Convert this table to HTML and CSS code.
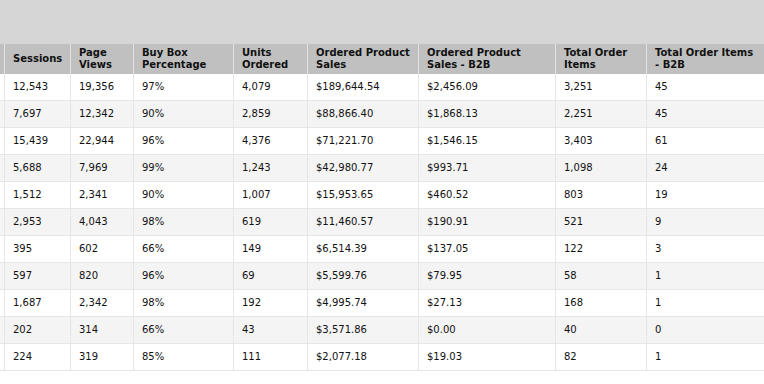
FILE: index.html
```html
<!DOCTYPE html>
<html>
<head>
<meta charset="utf-8">
<link rel="stylesheet" href="styles.css">
</head>
<body>
<div class="topbar"></div>
<div class="wrap">
<table class="grid">
<colgroup>
<col class="c0"><col class="c1"><col class="c2"><col class="c3"><col class="c4"><col class="c5"><col class="c6"><col class="c7"><col class="c8">
</colgroup>
<thead>
<tr><th></th><th>Sessions</th><th>Page<br>Views</th><th>Buy Box<br>Percentage</th><th>Units<br>Ordered</th><th>Ordered Product<br>Sales</th><th>Ordered Product<br>Sales - B2B</th><th>Total Order<br>Items</th><th>Total Order Items<br>- B2B</th></tr>
</thead>
<tbody>
<tr><td></td><td>12,543</td><td>19,356</td><td>97%</td><td>4,079</td><td>$189,644.54</td><td>$2,456.09</td><td>3,251</td><td>45</td></tr>
<tr><td></td><td>7,697</td><td>12,342</td><td>90%</td><td>2,859</td><td>$88,866.40</td><td>$1,868.13</td><td>2,251</td><td>45</td></tr>
<tr><td></td><td>15,439</td><td>22,944</td><td>96%</td><td>4,376</td><td>$71,221.70</td><td>$1,546.15</td><td>3,403</td><td>61</td></tr>
<tr><td></td><td>5,688</td><td>7,969</td><td>99%</td><td>1,243</td><td>$42,980.77</td><td>$993.71</td><td>1,098</td><td>24</td></tr>
<tr><td></td><td>1,512</td><td>2,341</td><td>90%</td><td>1,007</td><td>$15,953.65</td><td>$460.52</td><td>803</td><td>19</td></tr>
<tr><td></td><td>2,953</td><td>4,043</td><td>98%</td><td>619</td><td>$11,460.57</td><td>$190.91</td><td>521</td><td>9</td></tr>
<tr><td></td><td>395</td><td>602</td><td>66%</td><td>149</td><td>$6,514.39</td><td>$137.05</td><td>122</td><td>3</td></tr>
<tr><td></td><td>597</td><td>820</td><td>96%</td><td>69</td><td>$5,599.76</td><td>$79.95</td><td>58</td><td>1</td></tr>
<tr><td></td><td>1,687</td><td>2,342</td><td>98%</td><td>192</td><td>$4,995.74</td><td>$27.13</td><td>168</td><td>1</td></tr>
<tr><td></td><td>202</td><td>314</td><td>66%</td><td>43</td><td>$3,571.86</td><td>$0.00</td><td>40</td><td>0</td></tr>
<tr><td></td><td>224</td><td>319</td><td>85%</td><td>111</td><td>$2,077.18</td><td>$19.03</td><td>82</td><td>1</td></tr>
</tbody>
</table>
</div>
</body>
</html>
```
FILE: styles.css
```css
html, body {
  margin: 0;
  padding: 0;
  background: #ffffff;
  overflow: hidden;
}
body {
  font-family: "DejaVu Sans", Verdana, sans-serif;
  font-size: 10px;
  color: #111111;
}
.topbar {
  height: 44px;
  background: #d6d6d6;
}
.wrap {
  width: 764px;
  overflow: hidden;
}
.grid {
  table-layout: fixed;
  border-collapse: separate;
  border-spacing: 0;
  width: 809px;
}
.c0 { width: 5px; }
.c1 { width: 66px; }
.c2 { width: 63px; }
.c3 { width: 100px; }
.c4 { width: 74px; }
.c5 { width: 111px; }
.c6 { width: 137px; }
.c7 { width: 91px; }
.c8 { width: 162px; }
.grid th {
  background: #c0c0c0;
  font-weight: bold;
  text-align: left;
  vertical-align: middle;
  line-height: 12px;
  height: 30px;
  box-sizing: border-box;
  padding: 2px 0 2px 8px;
  border-right: 1px solid #e2e2e2;
  color: #111111;
  white-space: nowrap;
}
.grid td {
  height: 27px;
  box-sizing: border-box;
  padding: 0 0 0 8px;
  line-height: 12px;
  vertical-align: middle;
  border-right: 1px solid #e6e6e6;
  border-bottom: 1px solid #e6e6e6;
  white-space: nowrap;
}
.grid th:first-child, .grid td:first-child {
  padding: 0;
}
.grid tbody tr:nth-child(odd) td { background: #ffffff; }
.grid tbody tr:nth-child(even) td { background: #f4f4f4; }
```
